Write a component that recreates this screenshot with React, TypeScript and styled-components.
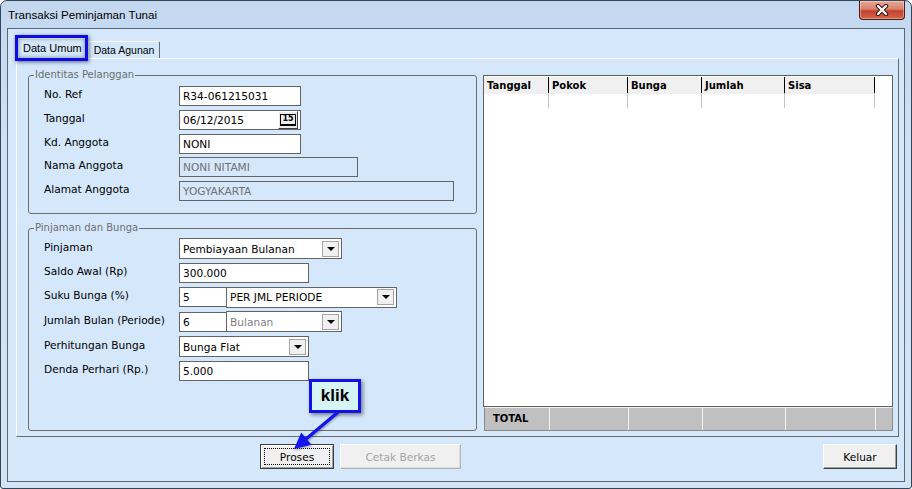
import React from "react";
import styled, { createGlobalStyle } from "styled-components";

const GlobalStyle = createGlobalStyle`
  html, body {
    margin: 0;
    padding: 0;
  }
  body {
    width: 912px;
    height: 489px;
    overflow: hidden;
    font-family: "DejaVu Sans", Verdana, sans-serif;
    font-size: 10.6px;
    color: #000;
  }
  * {
    box-sizing: border-box;
  }
`;

type Row = {
  label: string;
  field: React.ReactNode;
};

export default function App() {
  const identitas: Row[] = [
    { label: "No. Ref", field: <TextBox $w={122}>R34-061215031</TextBox> },
    {
      label: "Tanggal",
      field: (
        <DateBox $w={122}>
          <BoxText>06/12/2015</BoxText>
          <DateButton>
            <CalendarGlyph>15</CalendarGlyph>
          </DateButton>
        </DateBox>
      ),
    },
    { label: "Kd. Anggota", field: <TextBox $w={122}>NONI</TextBox> },
    {
      label: "Nama Anggota",
      field: (
        <TextBox $w={179} $disabled>
          NONI NITAMI
        </TextBox>
      ),
    },
    {
      label: "Alamat Anggota",
      field: (
        <TextBox $w={275} $disabled>
          YOGYAKARTA
        </TextBox>
      ),
    },
  ];

  const pinjaman: Row[] = [
    { label: "Pinjaman", field: <ComboBox w={163} text="Pembiayaan Bulanan" /> },
    { label: "Saldo Awal (Rp)", field: <TextBox $w={130}>300.000</TextBox> },
    {
      label: "Suku Bunga (%)",
      field: (
        <FieldPair>
          <TextBox $w={48}>5</TextBox>
          <ComboBox w={171} text="PER JML PERIODE" joined />
        </FieldPair>
      ),
    },
    {
      label: "Jumlah Bulan (Periode)",
      field: (
        <FieldPair>
          <TextBox $w={48}>6</TextBox>
          <ComboBox w={116} text="Bulanan" joined disabled />
        </FieldPair>
      ),
    },
    { label: "Perhitungan Bunga", field: <ComboBox w={130} text="Bunga Flat" /> },
    { label: "Denda Perhari (Rp.)", field: <TextBox $w={130}>5.000</TextBox> },
  ];

  const columns = ["Tanggal", "Pokok", "Bunga", "Jumlah", "Sisa"];

  return (
    <>
      <GlobalStyle />
      <Window>
        <TitleBar>
          <Title>Transaksi Peminjaman Tunai</Title>
          <CloseButton>
            <svg width="16" height="12" viewBox="0 0 16 12">
              <path d="M4 2 L12 10 M12 2 L4 10" stroke="#3b1410" strokeWidth="4.4" strokeLinecap="round" />
              <path d="M4 2 L12 10 M12 2 L4 10" stroke="#ffffff" strokeWidth="2.4" strokeLinecap="round" />
            </svg>
          </CloseButton>
        </TitleBar>

        <Client>
          <TabStrip>
            <Tab $active>Data Umum</Tab>
            <Tab>Data Agunan</Tab>
          </TabStrip>

          <TabPage>
            <LeftColumn>
              <Group $h={145}>
                <Legend>Identitas Pelanggan</Legend>
                <FormGrid>
                  {identitas.map((r) => (
                    <React.Fragment key={r.label}>
                      <Label>{r.label}</Label>
                      {r.field}
                    </React.Fragment>
                  ))}
                </FormGrid>
              </Group>
              <Group>
                <Legend>Pinjaman dan Bunga</Legend>
                <FormGrid $tight>
                  {pinjaman.map((r) => (
                    <React.Fragment key={r.label}>
                      <Label>{r.label}</Label>
                      {r.field}
                    </React.Fragment>
                  ))}
                </FormGrid>
              </Group>
            </LeftColumn>

            <GridColumn>
              <DataGrid>
                <GridRow>
                  {columns.map((c) => (
                    <HeaderCell key={c}>{c}</HeaderCell>
                  ))}
                  <span />
                </GridRow>
                <GridRow $h={15}>
                  {columns.map((c) => (
                    <DataCell key={c} />
                  ))}
                  <span />
                </GridRow>
              </DataGrid>
              <FooterGrid>
                <FooterCell $bold>TOTAL</FooterCell>
                <FooterCell />
                <FooterCell />
                <FooterCell />
                <FooterCell />
                <FooterCell $last />
              </FooterGrid>
            </GridColumn>
          </TabPage>

          <ButtonRow>
            <Button $w={74} $default>
              <FocusRect>Proses</FocusRect>
            </Button>
            <Button $w={121} $disabled>
              Cetak Berkas
            </Button>
            <Spacer />
            <Button $w={74}>Keluar</Button>
          </ButtonRow>
        </Client>

        <TabHighlight />
        <Callout>klik</Callout>
        <Arrow width="70" height="60" viewBox="0 0 70 60">
          <path d="M56 12 L25.3 37.7" stroke="#1414f0" strokeWidth="3.2" strokeLinecap="round" />
          <polygon points="13,48 30.4,43.8 20.2,31.6" fill="#1414f0" />
        </Arrow>
      </Window>
    </>
  );
}

function ComboBox({
  w,
  text,
  joined,
  disabled,
}: {
  w: number;
  text: string;
  joined?: boolean;
  disabled?: boolean;
}) {
  return (
    <Combo $w={w} $joined={joined} $disabled={disabled}>
      <BoxText>{text}</BoxText>
      <DropButton>
        <Caret />
      </DropButton>
    </Combo>
  );
}

const Window = styled.div`
  position: relative;
  width: 912px;
  height: 489px;
  display: flex;
  flex-direction: column;
  border: 1px solid #34475a;
  border-radius: 7px 7px 3px 3px;
  background: linear-gradient(180deg, #c3d8ef 0%, #cfe1f4 30%, #d3e4f6 100%);
  overflow: hidden;
`;

const TitleBar = styled.div`
  height: 27px;
  display: flex;
  align-items: flex-start;
  justify-content: space-between;
  padding-left: 7px;
`;

const Title = styled.div`
  font-family: "Liberation Sans", Arial, sans-serif;
  font-size: 11.6px;
  line-height: 28px;
  color: #000;
`;

const CloseButton = styled.div`
  width: 46px;
  height: 19px;
  margin-right: 6px;
  border: 1px solid #4a1c16;
  border-top: none;
  border-radius: 0 0 4px 4px;
  background: linear-gradient(180deg, #e9a796 0%, #d9806c 45%, #c2432e 55%, #d46546 100%);
  box-shadow: inset 0 0 0 1px rgba(255, 255, 255, 0.35);
  display: flex;
  align-items: center;
  justify-content: center;
`;

const Client = styled.div`
  flex: 1;
  margin: 0 6px 6px 6px;
  border: 1px solid #56687a;
  background: #d4e7fb;
  display: flex;
  flex-direction: column;
  padding: 9px 5px 0 8px;
`;

const TabStrip = styled.div`
  height: 20px;
  display: flex;
  align-items: flex-end;
  padding-left: 1px;
  position: relative;
  z-index: 1;
`;

const Tab = styled.div<{ $active?: boolean }>`
  font-family: "Liberation Sans", Arial, sans-serif;
  font-size: ${(p) => (p.$active ? 11 : 10.5)}px;
  height: ${(p) => (p.$active ? 21 : 17)}px;
  margin-bottom: ${(p) => (p.$active ? -1 : 0)}px;
  padding: ${(p) => (p.$active ? "0 5px 2px" : "0 5px")};
  display: flex;
  align-items: center;
  background: #d4e7fb;
  border: 1px solid;
  border-color: #ffffff #6a6a6a transparent #ffffff;
  border-bottom: none;
  border-radius: 2px 2px 0 0;
  white-space: nowrap;
`;

const TabPage = styled.div`
  flex: 1;
  display: flex;
  gap: 6px;
  padding: 10px 5px 5px 11px;
  border: 1px solid;
  border-color: #ffffff #6a6a6a #6a6a6a #ffffff;
`;

const LeftColumn = styled.div`
  width: 449px;
  display: flex;
  flex-direction: column;
  gap: 8px;
`;

const Group = styled.fieldset<{ $h?: number }>`
  margin: 0;
  padding: 0;
  min-width: 0;
  border: 1px solid #6e6e6e;
  border-radius: 3px;
  ${(p) => (p.$h ? `height: ${p.$h}px;` : "flex: 1;")}
`;

const Legend = styled.legend`
  margin-left: 5px;
  padding: 0 1px;
  font-size: 10px;
  line-height: 12px;
  color: #6d6d6d;
`;

const FormGrid = styled.div<{ $tight?: boolean }>`
  display: grid;
  grid-template-columns: 135px 1fr;
  align-items: center;
  row-gap: ${(p) => (p.$tight ? 3.8 : 3.8)}px;
  padding: ${(p) => (p.$tight ? 4 : 5)}px 0 0 15px;
`;

const Label = styled.div`
  white-space: nowrap;
  padding-bottom: 4px;
`;

const BoxText = styled.span`
  flex: 1;
  white-space: nowrap;
  overflow: hidden;
`;

const TextBox = styled.div<{ $w: number; $disabled?: boolean }>`
  width: ${(p) => p.$w}px;
  height: 20px;
  border: 1px solid #646464;
  background: ${(p) => (p.$disabled ? "transparent" : "#ffffff")};
  color: ${(p) => (p.$disabled ? "#707070" : "#000000")};
  padding: 0 3px;
  line-height: 18px;
  white-space: nowrap;
  overflow: hidden;
`;

const DateBox = styled.div<{ $w: number }>`
  width: ${(p) => p.$w}px;
  height: 20px;
  border: 1px solid #646464;
  background: #ffffff;
  display: flex;
  align-items: center;
  padding: 0 2px 0 3px;
`;

const DateButton = styled.span`
  width: 20px;
  height: 18px;
  display: flex;
  align-items: center;
  justify-content: center;
  background: #ebebeb;
  border: 1px solid;
  border-color: #ffffff #404040 #404040 #ffffff;
`;

const CalendarGlyph = styled.span`
  font-size: 8px;
  font-weight: bold;
  line-height: 8px;
  padding: 0 1px 1px;
  border: 1px solid #000;
  border-bottom-width: 2px;
`;

const FieldPair = styled.div`
  display: flex;
  align-items: center;
`;

const Combo = styled.div<{ $w: number; $joined?: boolean; $disabled?: boolean }>`
  width: ${(p) => p.$w}px;
  height: 21px;
  margin-left: ${(p) => (p.$joined ? -1 : 0)}px;
  border: 1px solid #646464;
  background: #ffffff;
  color: ${(p) => (p.$disabled ? "#808080" : "#000000")};
  display: flex;
  align-items: center;
  padding: 0 2px 0 3px;
`;

const DropButton = styled.span`
  width: 17px;
  height: 16px;
  display: flex;
  align-items: center;
  justify-content: center;
  background: #f0f0f0;
  border: 1px solid #a5a5a5;
`;

const Caret = styled.span`
  width: 0;
  height: 0;
  border-left: 4px solid transparent;
  border-right: 4px solid transparent;
  border-top: 4px solid #000;
`;

const GridColumn = styled.div`
  flex: 1;
  margin-top: 6px;
  display: flex;
  flex-direction: column;
`;

const DataGrid = styled.div`
  flex: 1;
  background: #ffffff;
  border: 1px solid #5f5f5f;
`;

const GridRow = styled.div<{ $h?: number }>`
  display: grid;
  grid-template-columns: 65px 79px 74px 83px 90px 1fr;
  height: ${(p) => p.$h ?? 17}px;
`;

const HeaderCell = styled.div`
  background: #f0f0f0;
  border-right: 1px solid #000;
  font-weight: bold;
  font-size: 10px;
  line-height: 17px;
  padding-left: 3px;
  margin-top: 1px;
`;

const DataCell = styled.div`
  border-right: 1px solid #c4c4c4;
`;

const FooterGrid = styled.div`
  height: 24px;
  margin-left: 1px;
  display: grid;
  grid-template-columns: 65px 79px 74px 83px 90px 1fr;
  background: #c0c0c0;
  border: 1px solid #8a8a8a;
  border-top: 1px solid #f2f2f2;
`;

const FooterCell = styled.div<{ $bold?: boolean; $last?: boolean }>`
  border-right: ${(p) => (p.$last ? "none" : "1px solid #f2f2f2")};
  font-weight: ${(p) => (p.$bold ? "bold" : "normal")};
  font-size: 10px;
  line-height: 21px;
  padding-left: 8px;
`;

const ButtonRow = styled.div`
  height: 25px;
  margin: 7px 0 12px;
  display: flex;
  align-items: center;
  gap: 6px;
  padding: 0 2px 0 244px;
`;

const Spacer = styled.div`
  flex: 1;
`;

const Button = styled.div<{ $w: number; $default?: boolean; $disabled?: boolean }>`
  width: ${(p) => p.$w}px;
  height: 25px;
  display: flex;
  align-items: center;
  justify-content: center;
  background: #f0f0f0;
  color: ${(p) => (p.$disabled ? "#a3a3a3" : "#000000")};
  border: 1px solid;
  border-color: ${(p) =>
    p.$default
      ? "#3c3c3c"
      : p.$disabled
      ? "#ffffff #b4b4b4 #b4b4b4 #ffffff"
      : "#ffffff #404040 #404040 #ffffff"};
  box-shadow: ${(p) =>
    p.$default
      ? "inset 1px 1px 0 #ffffff, inset -1px -1px 0 #a0a0a0"
      : p.$disabled
      ? "inset -1px -1px 0 #dcdcdc"
      : "inset -1px -1px 0 #a0a0a0"};
`;

const FocusRect = styled.span`
  width: calc(100% - 6px);
  height: calc(100% - 6px);
  display: flex;
  align-items: center;
  justify-content: center;
  border: 1px dotted #000;
`;

const TabHighlight = styled.div`
  position: absolute;
  left: 14px;
  top: 34px;
  width: 73px;
  height: 26px;
  border: 3px solid #0c0ce6;
  box-shadow: 1px 1px 4px rgba(0, 0, 0, 0.55), inset 0 0 4px rgba(0, 0, 0, 0.45);
  pointer-events: none;
  z-index: 2;
`;

const Callout = styled.div`
  position: absolute;
  left: 308px;
  top: 378px;
  width: 52px;
  height: 34px;
  border: 3px solid #1212e6;
  background: #d6f4f3;
  box-shadow: 2px 2px 4px rgba(0, 0, 0, 0.45);
  display: flex;
  align-items: center;
  justify-content: center;
  font-family: "Liberation Sans", Arial, sans-serif;
  font-weight: bold;
  font-size: 17px;
  color: #000;
  z-index: 3;
`;

const Arrow = styled.svg`
  position: absolute;
  left: 280px;
  top: 400px;
  filter: drop-shadow(1px 1px 1px rgba(0, 0, 0, 0.35));
  z-index: 3;
`;
